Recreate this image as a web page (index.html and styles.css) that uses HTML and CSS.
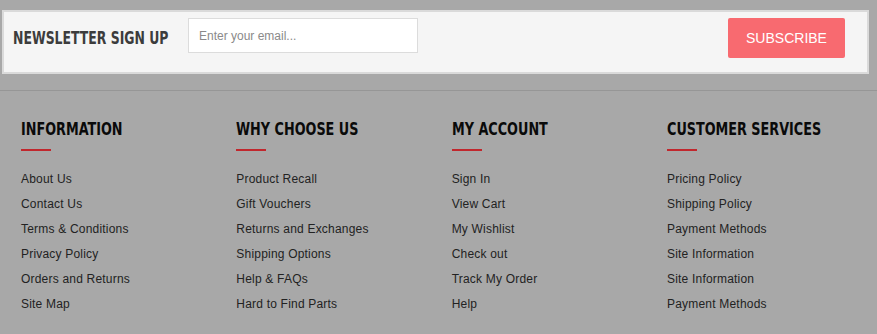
FILE: index.html
```html
<!DOCTYPE html>
<html lang="en">
<head>
  <meta charset="UTF-8" />
  <title>Footer</title>
  <link rel="stylesheet" href="styles.css">
</head>
<body>
  <div class="newsletter">
    <h3 class="newsletter-title"><span class="narrow">NEWSLETTER SIGN UP</span></h3>
    <input class="newsletter-input" type="text" placeholder="Enter your email...">
    <button class="subscribe-btn">SUBSCRIBE</button>
  </div>

  <footer class="footer">
    <div class="footer-col">
      <h4 class="footer-title"><span class="narrow">INFORMATION</span></h4>
      <ul class="footer-links">
        <li><a href="#">About Us</a></li>
        <li><a href="#">Contact Us</a></li>
        <li><a href="#">Terms &amp; Conditions</a></li>
        <li><a href="#">Privacy Policy</a></li>
        <li><a href="#">Orders and Returns</a></li>
        <li><a href="#">Site Map</a></li>
      </ul>
    </div>
    <div class="footer-col">
      <h4 class="footer-title"><span class="narrow">WHY CHOOSE US</span></h4>
      <ul class="footer-links">
        <li><a href="#">Product Recall</a></li>
        <li><a href="#">Gift Vouchers</a></li>
        <li><a href="#">Returns and Exchanges</a></li>
        <li><a href="#">Shipping Options</a></li>
        <li><a href="#">Help &amp; FAQs</a></li>
        <li><a href="#">Hard to Find Parts</a></li>
      </ul>
    </div>
    <div class="footer-col">
      <h4 class="footer-title"><span class="narrow">MY ACCOUNT</span></h4>
      <ul class="footer-links">
        <li><a href="#">Sign In</a></li>
        <li><a href="#">View Cart</a></li>
        <li><a href="#">My Wishlist</a></li>
        <li><a href="#">Check out</a></li>
        <li><a href="#">Track My Order</a></li>
        <li><a href="#">Help</a></li>
      </ul>
    </div>
    <div class="footer-col">
      <h4 class="footer-title"><span class="narrow">CUSTOMER SERVICES</span></h4>
      <ul class="footer-links">
        <li><a href="#">Pricing Policy</a></li>
        <li><a href="#">Shipping Policy</a></li>
        <li><a href="#">Payment Methods</a></li>
        <li><a href="#">Site Information</a></li>
        <li><a href="#">Site Information</a></li>
        <li><a href="#">Payment Methods</a></li>
      </ul>
    </div>
  </footer>
</body>
</html>
```

FILE: styles.css
```css
:root {
  --bg: #a8a8a8;
  --box: #f5f5f5;
  --box-border: #dadada;
  --line: #969696;
  --accent: #c1272d;
  --btn: #f86a70;
  --text: #222;
  --heading-font: 'DejaVu Sans Condensed', 'Liberation Sans', Arial, sans-serif;
}
html, body {
  margin: 0;
  padding: 0;
  background: var(--bg);
  font-family: 'Liberation Sans', Arial, sans-serif;
  color: var(--text);
}
/* condensed look for the heading font */
.narrow {
  display: inline-block;
  white-space: nowrap;
  transform: scaleX(0.79);
  transform-origin: left center;
}
.newsletter {
  display: flex;
  align-items: flex-start;
  margin: 10px 8px 0 2px;
  padding: 6px 22px 14px 9px;
  height: 40px;
  background: var(--box);
  border: 2px solid var(--box-border);
}
.newsletter-title {
  flex: none;
  width: 162px;
  margin: 0 13px 0 0;
  font-family: var(--heading-font);
  font-size: 17.5px;
  font-weight: 700;
  line-height: 40px;
  color: #3c3c3c;
  white-space: nowrap;
}
.newsletter-input {
  width: 230px;
  height: 35px;
  box-sizing: border-box;
  padding: 0 10px;
  border: 1px solid #dcdcdc;
  background: #fff;
  font-family: 'Liberation Sans', Arial, sans-serif;
  font-size: 12px;
  outline: none;
}
.newsletter-input::placeholder {
  color: #8a8a8a;
}
.subscribe-btn {
  margin-left: auto;
  width: 117px;
  height: 40px;
  border: none;
  border-radius: 2px;
  background: var(--btn);
  color: #fff;
  font-family: 'Liberation Sans', Arial, sans-serif;
  font-size: 14px;
  cursor: pointer;
}
.footer {
  display: grid;
  grid-template-columns: repeat(4, 215.33px);
  margin-top: 16px;
  padding: 0 0 0 21px;
  border-top: 1px solid var(--line);
}
.footer-title {
  position: relative;
  margin: 28px 0 0;
  padding-bottom: 12px;
  font-family: var(--heading-font);
  font-size: 18px;
  font-weight: 700;
  line-height: 20px;
  color: #0a0a0a;
  white-space: nowrap;
}
.footer-title::after {
  content: "";
  position: absolute;
  left: 0;
  bottom: 0;
  width: 30px;
  height: 2px;
  background: var(--accent);
}
.footer-links {
  list-style: none;
  margin: 21px 0 0;
  padding: 0;
}
.footer-links li {
  height: 25px;
  font-size: 12px;
  line-height: 15px;
  letter-spacing: 0.2px;
}
.footer-links a {
  color: var(--text);
  text-decoration: none;
}
```
